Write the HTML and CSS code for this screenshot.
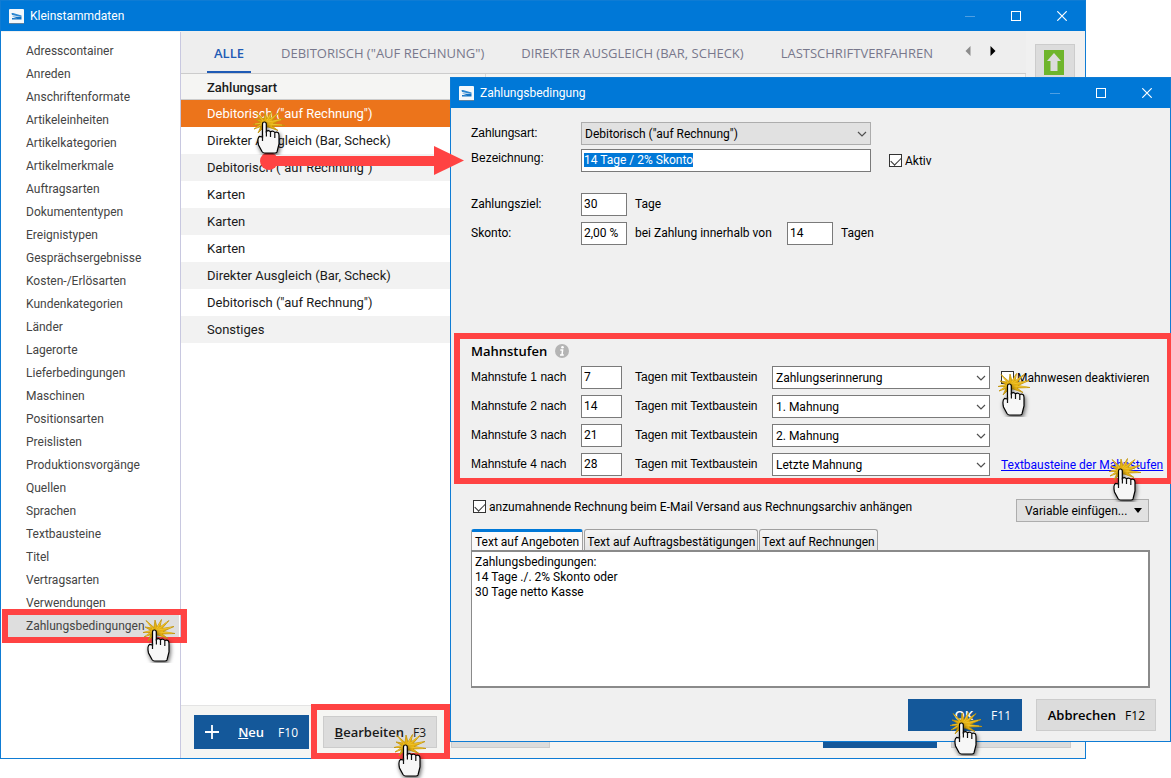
FILE: index.html
```html
<!DOCTYPE html>
<html lang="de">
<head>
<meta charset="utf-8">
<title>Kleinstammdaten</title>
<link rel="stylesheet" href="styles.css">
</head>
<body>
<svg class="defs" aria-hidden="true">
  <symbol id="logo" viewBox="0 0 15 15">
    <rect width="15" height="15" rx="1" fill="#f4f8fb"/>
    <rect y="14" width="15" height="1" fill="#5d7f9c"/>
    <path d="M2.500 4 H4 L12.500 6.500 V8 L3 6 Z" fill="#2c86d0"/>
    <path d="M3 7.500 L12.500 8 V10.500 H3 V9 L8 9.200 Z" fill="#1272c4"/>
  </symbol>
  <symbol id="min" viewBox="0 0 10 10"><path d="M0 5.500 H10" stroke="#4f9fe2" fill="none"/></symbol>
  <symbol id="max" viewBox="0 0 10 10"><rect x=".5" y=".5" width="9" height="9" stroke="#fff" fill="none"/></symbol>
  <symbol id="close" viewBox="0 0 10 10"><path d="M.3 .3 L9.700 9.700 M9.700 .3 L.3 9.700" stroke="#fff" stroke-width="1.200" fill="none"/></symbol>
  <symbol id="chevron" viewBox="0 0 10 6"><path d="M1 1 L5 5 L9 1" stroke="#505050" stroke-width="1.200" fill="none"/></symbol>
  <symbol id="hand" viewBox="0 0 44 50">
    <path d="M16 14.500 L8 7.500 L14 15 L7 14 L13 17.500 L5 19.500 L12.500 19.500 L6 24 L13 21.500 L10 28 L15 23 L20 22 L30 25.500 L24 21 L37 20.500 L25 18.500 L36 13.500 L24 15.500 L31 7.500 L22 14 L23.500 6.500 L19 14 L17 7 Z" fill="#e8b210" stroke="#c2940c" stroke-width=".8"/>
    <path d="M18 17 L22.500 9 M19 17 L29 9 M20 17 L33 14.500 M20 19 L34 20 M15 18 L8 23 M16 17 L9 9 M14 18 L7 19" stroke="#f3cb3a" stroke-width=".7" fill="none"/>
    <path class="hand-shadow" d="M14.500 19 Q14.500 17 16.300 17 Q18.300 17 18.300 19 V26.500 Q20.500 24.500 22.500 26.800 Q25 25 26.800 27.500 Q31 26 31 30.500 V39 L29 47 Q28.500 48 27 48 H16.500 Q15 48 14 46.500 L10.500 40 Q9 33 11.500 31.500 L14.500 32 Z" fill="#f7f7f7" stroke="#000" stroke-width="1.200"/>
    <path d="M18.400 26 V31.500 M22.500 27 V32 M26.800 28 V33 M14.500 30 V36" stroke="#111" stroke-width="1.200" fill="none"/>
  </symbol>
</svg>

<main class="desktop">
  <section class="window window-main" aria-label="Kleinstammdaten">
    <header class="titlebar">
      <svg class="logo"><use href="#logo"/></svg>
      <h1 class="title">Kleinstammdaten</h1>
      <button class="winbtn" aria-label="Minimieren"><svg><use href="#min"/></svg></button>
      <button class="winbtn" aria-label="Maximieren"><svg><use href="#max"/></svg></button>
      <button class="winbtn" aria-label="Schließen"><svg><use href="#close"/></svg></button>
    </header>
    <div class="main-body">
      <nav class="sidebar">
        <a href="#">Adresscontainer</a>
        <a href="#">Anreden</a>
        <a href="#">Anschriftenformate</a>
        <a href="#">Artikeleinheiten</a>
        <a href="#">Artikelkategorien</a>
        <a href="#">Artikelmerkmale</a>
        <a href="#">Auftragsarten</a>
        <a href="#">Dokumententypen</a>
        <a href="#">Ereignistypen</a>
        <a href="#">Gesprächsergebnisse</a>
        <a href="#">Kosten-/Erlösarten</a>
        <a href="#">Kundenkategorien</a>
        <a href="#">Länder</a>
        <a href="#">Lagerorte</a>
        <a href="#">Lieferbedingungen</a>
        <a href="#">Maschinen</a>
        <a href="#">Positionsarten</a>
        <a href="#">Preislisten</a>
        <a href="#">Produktionsvorgänge</a>
        <a href="#">Quellen</a>
        <a href="#">Sprachen</a>
        <a href="#">Textbausteine</a>
        <a href="#">Titel</a>
        <a href="#">Vertragsarten</a>
        <a href="#">Verwendungen</a>
        <a href="#" class="selected">Zahlungsbedingungen<span class="marker"></span><svg class="pointer"><use href="#hand"/></svg></a>
      </nav>
      <div class="content">
        <div class="upper">
          <div class="listing">
            <div class="filters">
              <button class="filter active">ALLE</button>
              <button class="filter">DEBITORISCH ("AUF RECHNUNG")</button>
              <button class="filter">DIREKTER AUSGLEICH (BAR, SCHECK)</button>
              <button class="filter">LASTSCHRIFTVERFAHREN</button>
              <span class="arrows">
                <button class="step" aria-label="Zurück"><svg viewBox="0 0 6 10"><path d="M5.500 0 V10 L.5 5 Z" fill="#8c8c8c"/></svg></button>
                <button class="step" aria-label="Weiter"><svg viewBox="0 0 6 10"><path d="M.5 0 V10 L5.500 5 Z" fill="#000"/></svg></button>
              </span>
            </div>
            <table class="list">
              <thead><tr><th>Zahlungsart</th><th></th></tr></thead>
              <tbody>
                <tr class="current"><td colspan="2">Debitorisch ("auf Rechnung")<svg class="pointer"><use href="#hand"/></svg></td></tr>
                <tr><td colspan="2">Direkter Ausgleich (Bar, Scheck)</td></tr>
                <tr><td colspan="2">Debitorisch ("auf Rechnung")</td></tr>
                <tr><td colspan="2">Karten</td></tr>
                <tr><td colspan="2">Karten</td></tr>
                <tr><td colspan="2">Karten</td></tr>
                <tr><td colspan="2">Direkter Ausgleich (Bar, Scheck)</td></tr>
                <tr><td colspan="2">Debitorisch ("auf Rechnung")</td></tr>
                <tr><td colspan="2">Sonstiges</td></tr>
              </tbody>
            </table>
          </div>
          <div class="tools">
            <button class="tool" aria-label="Nach oben"><svg viewBox="0 0 20 25"><rect width="20" height="25" fill="#6fb52c"/><path d="M10 3 L17 11 H13.500 V21 H6.500 V11 H3 Z" fill="#dcdcdc"/></svg></button>
          </div>
        </div>
        <footer class="actions">
          <button class="action primary tall"><svg class="plus" viewBox="0 0 14 14"><path d="M7 0 V14 M0 7 H14" stroke="#fff" stroke-width="1.800"/></svg><b><u>N</u>eu</b><span>F10</span></button>
          <div class="marked">
            <button class="action edit"><b><u>B</u>earbeiten</b><span>F3</span></button>
            <span class="marker"></span>
            <svg class="pointer"><use href="#hand"/></svg>
          </div>
          <button class="action third" aria-label="Löschen"></button>
          <span class="spacer"></span>
          <button class="action primary ok" aria-label="Übernehmen"></button>
          <button class="action cancel" aria-label="Schließen"></button>
        </footer>
      </div>
    </div>
  </section>

  <section class="window window-dialog" aria-label="Zahlungsbedingung">
    <header class="titlebar">
      <svg class="logo"><use href="#logo"/></svg>
      <h2 class="title">Zahlungsbedingung</h2>
      <button class="winbtn" aria-label="Minimieren"><svg><use href="#min"/></svg></button>
      <button class="winbtn" aria-label="Maximieren"><svg><use href="#max"/></svg></button>
      <button class="winbtn" aria-label="Schließen"><svg><use href="#close"/></svg></button>
    </header>
    <form class="form">
      <div class="terms">
        <div class="row row-kind">
          <label class="name arial" for="art">Zahlungsart:</label>
          <span class="select wide"><select id="art" class="gray"><option>Debitorisch ("auf Rechnung")</option></select><svg><use href="#chevron"/></svg></span>
        </div>
        <div class="row row-name">
          <label class="name arial" for="bez">Bezeichnung:</label>
          <input class="box wide" id="bez" type="text" value="14 Tage / 2% Skonto">
          <label class="check"><input type="checkbox" checked>Aktiv</label>
        </div>
        <div class="row row-due">
          <label class="name" for="ziel">Zahlungsziel:</label>
          <input class="box short" id="ziel" type="text" value="30"><span class="unit">Tage</span>
        </div>
        <div class="row">
          <label class="name" for="skonto">Skonto:</label>
          <input class="box short" id="skonto" type="text" value="2,00 %"><label class="unit within" for="frist">bei Zahlung innerhalb von</label>
          <input class="box short" id="frist" type="text" value="14"><span class="unit">Tagen</span>
        </div>
      </div>

      <fieldset class="levels">
        <div class="heading"><h3>Mahnstufen</h3>
          <svg class="info" viewBox="0 0 14 14"><circle cx="7" cy="7" r="7" fill="#b4b4b4"/><circle cx="7.500" cy="3.300" r="1.300" fill="#fff"/><path d="M5.300 6 H7.600 L7 11 M5 11 H8.800" stroke="#fff" stroke-width="1.500" fill="none"/></svg>
        </div>
        <div class="row">
          <label class="name arial" for="m1">Mahnstufe 1 nach</label><input class="box tiny" id="m1" type="text" value="7">
          <label class="with arial" for="t1">Tagen mit Textbaustein</label>
          <span class="select"><select id="t1"><option>Zahlungserinnerung</option></select><svg><use href="#chevron"/></svg></span>
          <label class="check side"><input type="checkbox">Mahnwesen deaktivieren<svg class="pointer"><use href="#hand"/></svg></label>
        </div>
        <div class="row">
          <label class="name arial" for="m2">Mahnstufe 2 nach</label><input class="box tiny" id="m2" type="text" value="14">
          <label class="with arial" for="t2">Tagen mit Textbaustein</label>
          <span class="select"><select id="t2"><option>1. Mahnung</option></select><svg><use href="#chevron"/></svg></span>
        </div>
        <div class="row">
          <label class="name arial" for="m3">Mahnstufe 3 nach</label><input class="box tiny" id="m3" type="text" value="21">
          <label class="with arial" for="t3">Tagen mit Textbaustein</label>
          <span class="select"><select id="t3"><option>2. Mahnung</option></select><svg><use href="#chevron"/></svg></span>
        </div>
        <div class="row">
          <label class="name arial" for="m4">Mahnstufe 4 nach</label><input class="box tiny" id="m4" type="text" value="28">
          <label class="with arial" for="t4">Tagen mit Textbaustein</label>
          <span class="select"><select id="t4"><option>Letzte Mahnung</option></select><svg><use href="#chevron"/></svg></span>
          <a class="side link" href="#">Textbausteine der Mahnstufen<svg class="pointer"><use href="#hand"/></svg></a>
        </div>
        <span class="marker"></span>
      </fieldset>

      <div class="attach">
        <label class="check"><input type="checkbox" checked>anzumahnende Rechnung beim E-Mail Versand aus Rechnungsarchiv anhängen</label>
        <button type="button" class="variable">Variable einfügen...<svg viewBox="0 0 8 5"><path d="M0 0 H8 L4 5 Z"/></svg></button>
      </div>
      <div class="texts">
        <div class="tabs">
          <button type="button" class="tab on">Text auf Angeboten</button>
          <button type="button" class="tab">Text auf Auftragsbestätigungen</button>
          <button type="button" class="tab">Text auf Rechnungen</button>
        </div>
        <textarea class="text" aria-label="Text auf Angeboten">Zahlungsbedingungen:
14 Tage ./. 2% Skonto oder
30 Tage netto Kasse</textarea>
      </div>
      <footer class="confirm">
        <button type="button" class="action primary ok"><b>OK</b><span>F11</span><svg class="pointer"><use href="#hand"/></svg></button>
        <button type="button" class="action cancel"><b>Abbrechen</b><span>F12</span></button>
      </footer>
    </form>
  </section>

  <svg class="link-arrow" viewBox="0 0 208 30" aria-hidden="true">
    <circle cx="9" cy="15" r="9"/><rect x="9" y="10" width="168" height="10"/><path d="M174 0 L204 14.500 L174 29 Z"/>
  </svg>
</main>
<script src="app.js"></script>
</body>
</html>
```

FILE: styles.css
```css
* { box-sizing: border-box; }
body {
  margin: 0;
  background: #fff;
  color: #1a1a1a;
  font: 12px/16px Roboto, "Open Sans", sans-serif;
}
button, input, select, textarea { font: inherit; color: inherit; border-radius: 0; }
button { padding: 0; border: 0; background: none; }
.defs { position: absolute; width: 0; height: 0; }

.desktop { position: relative; min-height: 100vh; display: flex; }
.window { display: flex; flex-direction: column; border: 1px solid #0f7cd4; background: #f0f0f0; }
.window-main { flex: 1; margin: 0 85px 19px 0; }
.window-dialog { position: absolute; inset: 77px 0 36px 450px; }

.titlebar { display: flex; align-items: center; height: 30px; flex: none; background: #0078d7; color: #fff; padding-left: 8px; }
.logo { width: 15px; height: 15px; }
.title { flex: 1; margin: 0 0 0 6px; font-size: 12px; font-weight: 400; }
.winbtn { width: 46px; height: 30px; display: flex; align-items: center; justify-content: center; }
.winbtn svg { width: 10px; height: 10px; }

.marker { position: absolute; border: 6px solid #ff4343; pointer-events: none; }
.pointer { position: absolute; width: 44px; height: 50px; z-index: 2; pointer-events: none; overflow: visible; }
.hand-shadow { filter: drop-shadow(1px 2px 2px rgba(0, 0, 0, .6)); }

.main-body { flex: 1; display: flex; }
.sidebar { width: 180px; flex: none; margin-top: 1px; padding: 7px 1px 0 7px; background: #fff; border-right: 1px solid #c8c8e0; }
.sidebar a { display: block; position: relative; height: 23px; padding-left: 18px; line-height: 24px; color: #444; text-decoration: none; }
.sidebar .selected { background: #dedede; }
.selected .marker { inset: -5px -8px -6px -6px; z-index: 1; }
.selected .pointer { left: 130px; top: -1px; }

.content { flex: 1; display: flex; flex-direction: column; min-width: 0; }
.upper { flex: 1; display: flex; min-width: 0; background: #fff; }
.listing { flex: 1; min-width: 0; }
.filters { display: flex; height: 43px; padding-left: 26px; gap: 23px; background: #eee; border-bottom: 1px solid #ccc; font-family: "Open Sans", sans-serif; }
.filter { padding: 4px 7px 0; font-size: 13px; color: #78788c; white-space: nowrap; border-bottom: 2px solid transparent; }
.filter.active { color: #1f5bb5; border-bottom-color: #1f5bb5; font-weight: 600; }
.arrows { display: flex; gap: 19px; padding: 0 0 2px 2px; align-items: center; }
.step { display: flex; }
.step svg { width: 6px; height: 10px; }
.tools { width: 59px; background: #f0f0f0; padding: 13px 9px; }
.tool { width: 40px; height: 48px; padding-right: 2px; background: #dcdcdc; border: 1px solid #ccc; }
.tool svg { width: 20px; height: 25px; margin-top: -7px; }

.list { width: 100%; border-spacing: 0; font-size: 13px; }
.list th { height: 26px; padding: 2px 0 0 26px; text-align: left; font-weight: 500; background: #f5f5f3; border-bottom: 1px solid #ccc; border-right: 1px solid #d8d8d8; }
.list th:first-child { width: 305px; }
.list td { height: 27px; padding: 0 0 0 26px; position: relative; }
.list tr:nth-child(odd) td { background: #f2f2f2; }
.list tr.current td { background: #ec741b; color: #fff; }
.current .pointer { left: 67px; top: 5px; }

.actions { display: flex; align-items: center; gap: 14px; height: 53px; padding: 0 14px 0 13px; background: #f5f5f3; border-top: 1px solid #e4e4e4; }
.action { display: flex; align-items: center; justify-content: flex-end; height: 32px; padding: 0 10px; background: #dcdcdc; border: 1px solid #ccc; font: 13px "Open Sans", sans-serif; position: relative; }
.action b { font-weight: 600; }
.action span { font-size: 12px; }
.action.primary { background: #14589a; border-color: #14589a; color: #fff; }
.action.tall { height: 34px; width: 115px; gap: 14px; }
.tall .plus { width: 14px; height: 14px; margin-right: auto; }
.marked { position: relative; }
.marked .marker { inset: -12px -13px -11px -12px; }
.marked .pointer { left: 66px; top: 12px; }
.edit { width: 114px; gap: 9px; }
.third { width: 99px; }
.spacer { flex: 1; }
.ok { width: 114px; gap: 18px; }
.cancel { width: 120px; gap: 9px; }

.form { flex: 1; display: flex; flex-direction: column; padding-top: 14px; color: #000; }
.row { display: flex; align-items: center; height: 23px; }
.arial { font-family: "Liberation Sans", Arial, sans-serif; }
.terms { display: flex; flex-direction: column; gap: 6px; margin: 0 20px 88px; }
.row-kind { margin-bottom: -2px; }
.row-due { margin-top: 15px; }
.name { width: 110px; flex: none; padding-bottom: 2px; }
.row-name .name { padding-bottom: 6px; }
.box { height: 23px; padding: 0 2px 1px; border: 1px solid #7a7a7a; background: #fff; outline: 0; }
.wide { width: 290px; }
.short { width: 46px; }
.tiny { width: 41px; }
.unit { padding: 0 0 2px 8px; }
.within { width: 160px; }
.check { display: flex; align-items: center; gap: 3px; position: relative; }
.row-name .check { margin-left: 18px; }
.check input { appearance: none; width: 13px; height: 13px; margin: 0; border: 1px solid #333; background: #fff; display: grid; place-items: center; }
.check input:checked::before { content: ""; width: 9px; height: 5px; border: solid #333; border-width: 0 0 1px 1px; transform: translateY(-1px) rotate(-45deg); }
.select { position: relative; display: flex; width: 218px; }
.select.wide { width: 290px; }
.select select { appearance: none; width: 100%; height: 23px; padding: 0 20px 0 3px; border: 1px solid #7a7a7a; background: #fff; }
.select .gray { background: #e1e1e1; border-color: #adadad; }
.select svg { position: absolute; right: 4px; top: 9px; width: 10px; height: 6px; }

.levels { position: relative; display: flex; flex-direction: column; gap: 6px; margin: 0 -1px 0 3px; padding: 9px 10px 8px 17px; border: 0; }
.levels .marker { inset: 0; }
.heading { display: flex; align-items: center; gap: 8px; height: 18px; }
.heading h3 { margin: 0; font: 600 13px "Open Sans", sans-serif; }
.info { width: 14px; height: 14px; }
.with { width: 150px; padding: 0 0 2px 13px; }
.side { margin-left: 11px; position: relative; white-space: nowrap; }
.side .pointer { left: -8px; top: -3px; }
.side.link { color: #00f; }
.link .pointer { left: 103px; top: -5px; }

.attach { display: flex; justify-content: space-between; margin: 15px 21px 7px 22px; }
.attach .check { height: 15px; }
.variable { display: flex; align-items: center; justify-content: space-between; width: 133px; height: 23px; padding: 0 6px 0 8px; background: #e1e1e1; border: 1px solid #adadad; }
.variable svg { width: 8px; height: 5px; }

.texts { flex: 1; display: flex; flex-direction: column; margin: 0 20px; }
.tabs { display: flex; gap: 1px; height: 21px; }
.tab { padding: 3px 2px 0; border: 1px solid #a0a0a0; border-bottom: 0; border-radius: 3px 3px 0 0; background: linear-gradient(#f4f4f4, #e4e4e4); white-space: nowrap; }
.tab.on { background: #fafafa; border-top: 3px solid #0078d7; padding: 1px 3px 0; }
.text { flex: 1; resize: none; padding: 3px 3px 2px; border: 2px solid #8a8a8a; border-width: 2px 2px 2px 1px; background: #fff; line-height: 15px; outline: 0; }
.confirm { display: flex; justify-content: flex-end; gap: 14px; margin: 11px 14px 10px; }
.confirm .pointer { left: 36px; top: 6px; }

.link-arrow { position: absolute; left: 260px; top: 146px; width: 208px; height: 30px; fill: #ff4343; }
#bez::selection { background: #0078d7; color: #fff; }
```

FILE: app.js
```js
const field = document.getElementById("bez");
field.focus();
field.select();
```
